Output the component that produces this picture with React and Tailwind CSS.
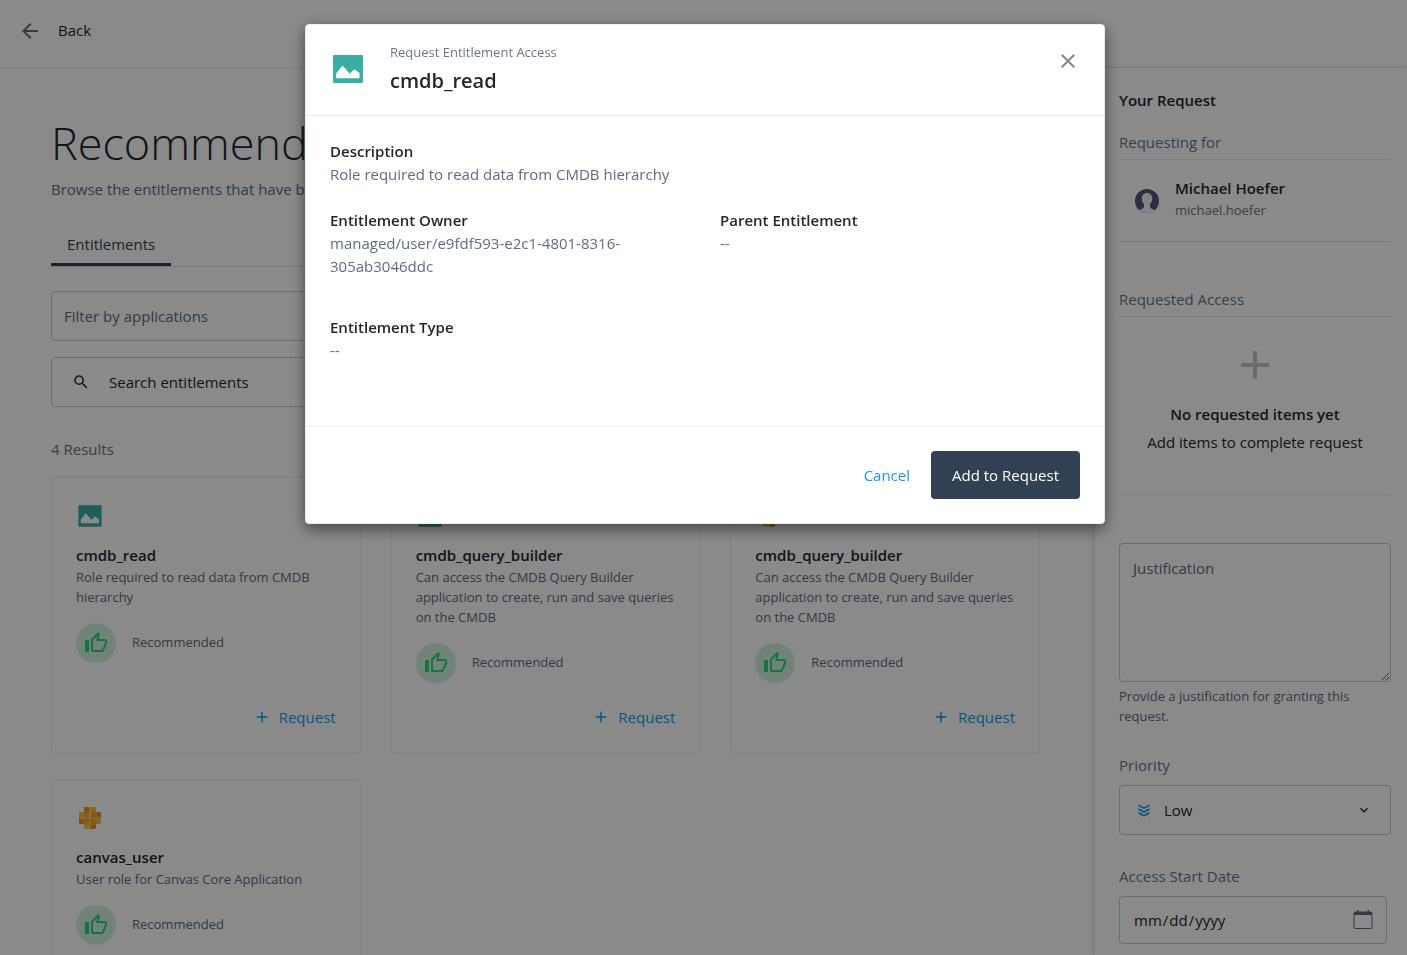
import {
  MdAdd,
  MdArrowBack,
  MdClose,
  MdExpandMore,
  MdOutlineThumbUp,
  MdSearch,
} from "react-icons/md";

const entitlements = [
  {
    id: 1,
    app: "image",
    name: "cmdb_read",
    description: "Role required to read data from CMDB hierarchy",
  },
  {
    id: 2,
    app: "image",
    name: "cmdb_query_builder",
    description:
      "Can access the CMDB Query Builder application to create, run and save queries on the CMDB",
  },
  {
    id: 3,
    app: "weave",
    name: "cmdb_query_builder",
    description:
      "Can access the CMDB Query Builder application to create, run and save queries on the CMDB",
  },
  {
    id: 4,
    app: "weave",
    name: "canvas_user",
    description: "User role for Canvas Core Application",
  },
];

const ImageIcon = ({ className }) => (
  <svg className={className} viewBox="0 0 106 106" aria-hidden="true">
    <rect x="9" y="12" width="88" height="82" rx="3" fill="#38ada4" />
    <path d="M18 66 37 43l21 24 14-13 15 11v13q0 2-2 2H20q-2 0-2-2z" fill="#fff" />
  </svg>
);

const WeaveIcon = ({ className }) => (
  <svg className={className} viewBox="0 0 84 84" aria-hidden="true">
    <defs>
      <linearGradient id="goldRight" x1="0" x2="1">
        <stop offset="0" stopColor="#ffc83d" />
        <stop offset="1" stopColor="#f39a1c" />
      </linearGradient>
      <linearGradient id="goldLeft" x1="1" x2="0">
        <stop offset="0" stopColor="#ffc83d" />
        <stop offset="1" stopColor="#f39a1c" />
      </linearGradient>
      <linearGradient id="goldDown" x1="0" x2="0" y1="0" y2="1">
        <stop offset="0" stopColor="#ffc83d" />
        <stop offset="1" stopColor="#f39a1c" />
      </linearGradient>
      <linearGradient id="goldUp" x1="0" x2="0" y1="1" y2="0">
        <stop offset="0" stopColor="#ffc83d" />
        <stop offset="1" stopColor="#f39a1c" />
      </linearGradient>
    </defs>
    <path d="M13 24h27v17H9V28q0-4 4-4z" fill="url(#goldRight)" />
    <path d="M43 9h13q4 0 4 4v28H43z" fill="url(#goldDown)" />
    <path d="M43 43h32v13q0 4-4 4H43z" fill="url(#goldLeft)" />
    <path d="M24 43h17v32H28q-4 0-4-4z" fill="url(#goldUp)" />
    <path d="M28 9h13v14H24V13q0-4 4-4z" fill="#f08c1a" />
    <path d="M61 24h10q4 0 4 4v13H61z" fill="#f08c1a" />
    <path d="M43 61h17v10q0 4-4 4H43z" fill="#f08c1a" />
    <path d="M9 43h14v17H13q-4 0-4-4z" fill="#f08c1a" />
  </svg>
);

const AvatarIcon = () => (
  <svg className="h-6 w-6" viewBox="0 0 24 24" aria-hidden="true">
    <defs>
      <clipPath id="avatarClip">
        <circle cx="12" cy="12" r="12" />
      </clipPath>
    </defs>
    <g clipPath="url(#avatarClip)">
      <rect width="24" height="24" fill="#515778" />
      <path
        d="M12 4c3.300 0 5.200 2.300 5.200 5.500 0 2.500-.9 4.500-2.200 5.600v2.400c0 1.500 1 2.200 6 4V24H3v-2.500c5-1.800 6-2.500 6-4v-2.400c-1.300-1.100-2.200-3.100-2.200-5.600C6.800 6.300 8.700 4 12 4z"
        fill="#f0f5f8"
      />
    </g>
  </svg>
);

const PriorityLowIcon = () => (
  <svg
    className="h-[13px] w-3 shrink-0"
    viewBox="0 0 12 13"
    fill="none"
    stroke="#109cf1"
    strokeWidth="1.600"
    aria-hidden="true"
  >
    <path d="M.5 1.200 6 4.200l5.500-3M.5 5 6 8l5.500-3M.5 8.800l5.500 3 5.500-3" />
  </svg>
);

const CalendarIcon = () => (
  <svg className="h-5 w-5 shrink-0" viewBox="0 0 20 20" fill="#5e6d82" aria-hidden="true">
    <path d="M4 0h1.500v1.500h9V0H16v1.500h1.500A2 2 0 0 1 19.500 3.500v13.500a2 2 0 0 1-2 2h-15a2 2 0 0 1-2-2V3.500a2 2 0 0 1 2-2H4zM1.500 5v12a1 1 0 0 0 1 1h15a1 1 0 0 0 1-1V5z" />
  </svg>
);

const AppIcon = ({ app, className }) =>
  app === "weave" ? (
    <WeaveIcon className={className} />
  ) : (
    <ImageIcon className={className} />
  );

const EntitlementCard = ({ item }) => (
  <article className="flex min-h-[277px] flex-col rounded border border-[#e7eef4] bg-white p-6">
    <AppIcon app={item.app} className="h-7 w-7" />
    <h2 className="mt-[13px] text-[15px] leading-6 font-semibold">{item.name}</h2>
    <p className="text-[13px] leading-5 text-[#5e6d82]">{item.description}</p>
    <div className="mt-4 flex items-center gap-4">
      <span className="flex h-10 w-10 items-center justify-center rounded-full bg-[#d1f3df]">
        <MdOutlineThumbUp className="h-6 w-6 text-[#2ed47a]" />
      </span>
      <span className="text-[13px] text-[#5e6d82]">Recommended</span>
    </div>
    <div className="mt-auto flex justify-end">
      <button
        type="button"
        className="flex items-center gap-2 text-[15px] leading-6 text-[#109cf1]"
      >
        <MdAdd className="h-[18px] w-[18px]" />
        Request
      </button>
    </div>
  </article>
);

const RequestPanel = () => (
  <aside className="w-[312px] shrink-0 bg-white pt-5 pr-4 pl-6 text-[15px] leading-6 shadow-[-2px_0_6px_rgba(0,0,0,0.12)]">
    <h2 className="font-semibold">Your Request</h2>
    <h3 className="mt-[18px] border-b border-[#e7eef4] pb-[5px] text-[#69788b]">
      Requesting for
    </h3>
    <div className="flex items-center gap-4 border-b border-[#d9dfe6] px-4 py-4">
      <AvatarIcon />
      <div className="pb-[5px]">
        <p className="font-semibold">Michael Hoefer</p>
        <p className="text-[13px] leading-5 text-[#69788b]">michael.hoefer</p>
      </div>
    </div>
    <h3 className="mt-[45px] border-b border-[#d9dfe6] pb-[5px] text-[#69788b]">
      Requested Access
    </h3>
    <div className="flex flex-col items-center border-b border-[#e7eef4] pt-6 pb-10">
      <MdAdd className="h-12 w-12 text-[#c6c6c6]" />
      <p className="mt-[13px] font-semibold">No requested items yet</p>
      <p className="mt-1">Add items to complete request</p>
    </div>
    <textarea
      aria-label="Justification"
      placeholder="Justification"
      className="mt-12 block h-[139px] w-full resize-y rounded border border-[#c0c9d5] px-[13px] py-3 placeholder:text-[#5e6d82]"
    />
    <p className="mt-1 text-[13px] leading-5 text-[#5e6d82]">
      Provide a justification for granting this request.
    </p>
    <label htmlFor="priority" className="mt-[27px] block text-[#69788b]">
      Priority
    </label>
    <div className="mt-2 flex h-[50px] items-center rounded border border-[#c0c9d5] pr-[18px] pl-[18px]">
      <PriorityLowIcon />
      <select id="priority" className="min-w-0 flex-1 appearance-none pl-[14px]">
        <option>Low</option>
      </select>
      <MdExpandMore className="h-4 w-4 shrink-0" />
    </div>
    <label htmlFor="startDate" className="mt-[29px] block text-[#69788b]">
      Access Start Date
    </label>
    <div className="mt-2 mr-1 flex h-12 items-center rounded border border-[#c0c9d5] px-[13px]">
      <input
        id="startDate"
        type="date"
        className="min-w-0 flex-1 [&::-webkit-calendar-picker-indicator]:hidden"
      />
      <CalendarIcon />
    </div>
  </aside>
);

const Detail = ({ label, value, className }) => (
  <div className={className}>
    <dt className="font-semibold">{label}</dt>
    <dd className="break-words text-[#5e6d82]">{value}</dd>
  </div>
);

const RequestModal = () => (
  <div className="fixed inset-0 z-10 flex items-start justify-center bg-black/46 pt-6 pr-4 pl-[19px]">
    <div
      role="dialog"
      aria-modal="true"
      aria-labelledby="modalTitle"
      className="w-full max-w-[800px] rounded border border-[#e7eef4] bg-white text-[15px] leading-[23px] shadow-[0_5px_15px_rgba(0,0,0,0.5)]"
    >
      <header className="flex items-start border-b border-[#e7eef4] px-6 pt-[17px] pb-[19px]">
        <ImageIcon className="mr-6 h-9 w-9 self-center" />
        <div className="flex-1">
          <p className="text-[13px] leading-5 text-[#69788b]">Request Entitlement Access</p>
          <h1 id="modalTitle" className="mt-1 text-xl leading-[30px] font-semibold">
            cmdb_read
          </h1>
        </div>
        <button type="button" aria-label="Close" className="mt-[7px]">
          <MdClose className="h-6 w-6 text-[#888888]" />
        </button>
      </header>
      <dl className="grid grid-cols-2 gap-x-[30px] px-6 pt-6 pb-[63px]">
        <Detail
          className="col-span-2 mb-[23px]"
          label="Description"
          value="Role required to read data from CMDB hierarchy"
        />
        <Detail
          className="mb-[38px] pr-[60px]"
          label="Entitlement Owner"
          value="managed/user/e9fdf593-e2c1-4801-8316-305ab3046ddc"
        />
        <Detail label="Parent Entitlement" value="--" />
        <Detail label="Entitlement Type" value="--" />
      </dl>
      <footer className="flex items-center justify-end gap-[21px] border-t-2 border-[#f2f5fa] p-6">
        <button type="button" className="text-[#109cf1]">
          Cancel
        </button>
        <button type="button" className="h-12 rounded bg-[#324054] px-[21px] text-white">
          Add to Request
        </button>
      </footer>
    </div>
  </div>
);

const App = () => {
  return (
    <div className="flex h-screen flex-col overflow-hidden bg-white font-['Open_Sans',sans-serif] text-[15px] text-[#23282e]">
      <nav className="flex h-[68px] shrink-0 items-center border-b border-[#e7eef4] px-[18px] pb-[6px]">
        <a href="#back" className="flex items-center gap-4">
          <MdArrowBack className="h-6 w-6 text-[#5e6d82]" />
          Back
        </a>
      </nav>
      <div className="flex min-h-0 flex-1">
        <main className="min-w-0 flex-1 overflow-hidden pt-[43px] pr-[55px] pl-[51px]">
          <h1 className="text-[45px] leading-[64px] font-light">Recommendations</h1>
          <p className="mt-[2px] leading-6 text-[#5e6d82]">
            Browse the entitlements that have been recommended for you
          </p>
          <div className="mt-6 flex border-b border-[#d9dfe6]">
            <button
              type="button"
              className="border-b-3 border-[#324054] px-4 py-[7px] leading-6 text-[#324054]"
            >
              Entitlements
            </button>
          </div>
          <input
            aria-label="Filter by applications"
            placeholder="Filter by applications"
            className="mt-6 block h-[50px] w-full rounded border border-[#c0c9d5] px-3 placeholder:text-[#5e6d82]"
          />
          <label className="mt-4 flex h-[50px] items-center rounded border border-[#c0c9d5] px-5">
            <MdSearch className="h-[18px] w-[18px]" />
            <input
              aria-label="Search entitlements"
              placeholder="Search entitlements"
              className="ml-[19px] flex-1 placeholder:text-[#23282e]"
            />
          </label>
          <p className="mt-[30px] leading-6 text-[#69788b]">4 Results</p>
          <div className="mt-4 grid grid-cols-3 gap-x-[30px] gap-y-[25px]">
            {entitlements.map((item) => (
              <EntitlementCard key={item.id} item={item} />
            ))}
          </div>
        </main>
        <RequestPanel />
      </div>
      <RequestModal />
    </div>
  );
};

export default App;
